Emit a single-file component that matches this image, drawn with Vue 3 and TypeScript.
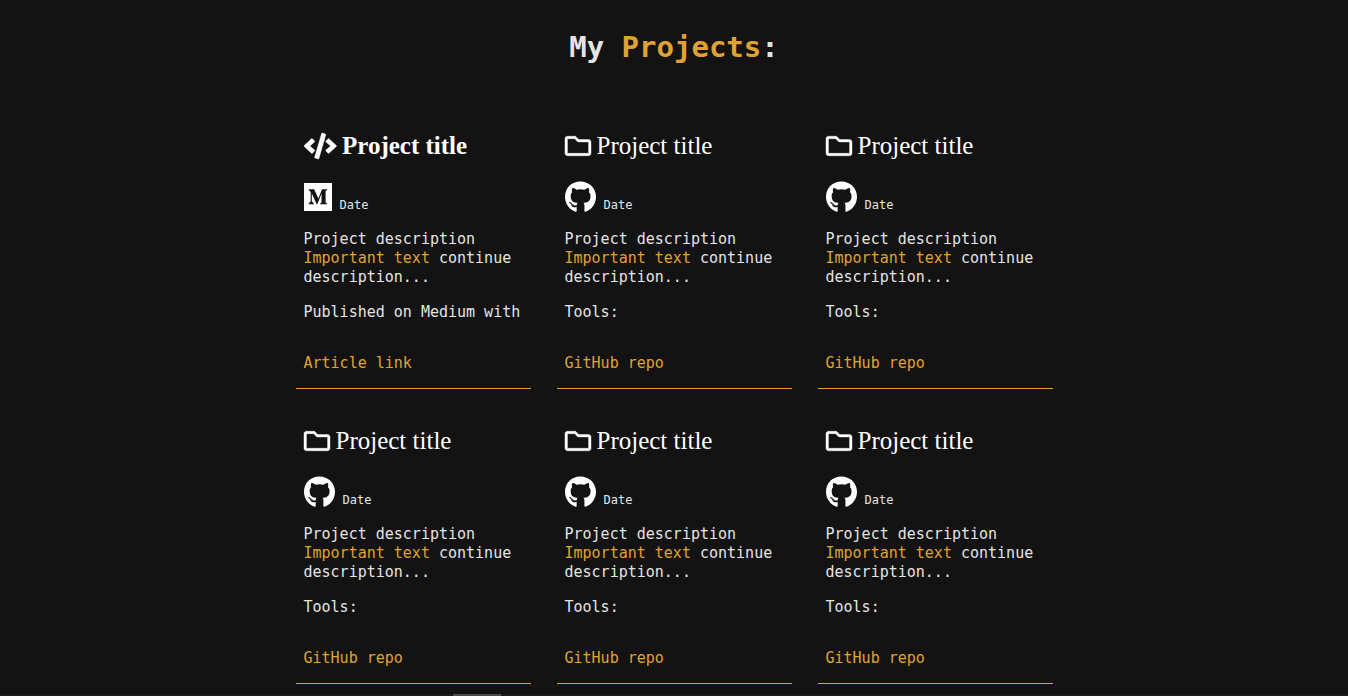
<script setup lang="ts">
type IconName = 'code' | 'folder' | 'github' | 'medium'

interface Project {
  id: number
  titleIcon: IconName
  sourceIcon: IconName
  featured: boolean
  note: string
  link: string
}

const icons: Record<IconName, { width: number; path: string }> = {
  code: {
    width: 640,
    path: 'M278.9 511.5l-61-17.7c-6.4-1.8-10-8.5-8.2-14.9L346.2 8.7c1.8-6.4 8.5-10 14.9-8.2l61 17.7c6.4 1.8 10 8.5 8.2 14.9L293.8 503.3c-1.9 6.4-8.5 10.1-14.9 8.2zm-114-112.2l43.5-46.4c4.6-4.9 4.3-12.7-.8-17.2L117 256l90.6-79.7c5.1-4.5 5.5-12.3.8-17.2l-43.5-46.4c-4.5-4.8-12.1-5.1-17-.5L3.8 247.2c-5.1 4.7-5.1 12.8 0 17.5l144.1 135.1c4.9 4.6 12.5 4.4 17-.5zm327.2.6l144.1-135.1c5.1-4.7 5.1-12.8 0-17.5L492.1 112.1c-4.8-4.5-12.4-4.3-17 .5L431.6 159c-4.6 4.9-4.3 12.7.8 17.2L523 256l-90.6 79.7c-5.1 4.5-5.5 12.3-.8 17.2l43.5 46.4c4.5 4.9 12.1 5.1 17 .6z',
  },
  folder: {
    width: 512,
    path: 'M464 128H272l-54.63-54.63c-6-6-14.14-9.37-22.63-9.37H48C21.49 64 0 85.49 0 112v288c0 26.51 21.49 48 48 48h416c26.51 0 48-21.49 48-48V176c0-26.51-21.49-48-48-48zm0 272H48V112h140.12l54.63 54.63c6 6 14.14 9.37 22.63 9.37H464v224z',
  },
  github: {
    width: 496,
    path: 'M165.9 397.4c0 2-2.3 3.6-5.2 3.6-3.3.3-5.6-1.3-5.6-3.6 0-2 2.3-3.6 5.2-3.6 3-.3 5.6 1.3 5.6 3.6zm-31.1-4.5c-.7 2 1.3 4.3 4.3 4.9 2.6 1 5.6 0 6.2-2s-1.3-4.3-4.3-5.2c-2.6-.7-5.5.3-6.2 2.3zm44.2-1.7c-2.9.7-4.9 2.6-4.6 4.9.3 2 2.9 3.3 5.9 2.6 2.9-.7 4.9-2.6 4.6-4.6-.3-1.9-3-3.2-5.9-2.9zM244.8 8C106.1 8 0 113.3 0 252c0 110.9 69.8 205.8 169.5 239.2 12.8 2.3 17.3-5.6 17.3-12.1 0-6.2-.3-40.4-.3-61.4 0 0-70 15-84.7-29.8 0 0-11.4-29.1-27.8-36.6 0 0-22.9-15.7 1.6-15.4 0 0 24.9 2 38.6 25.8 21.9 38.6 58.6 27.5 72.9 20.9 2.3-16 8.8-27.1 16-33.7-55.9-6.2-112.3-14.3-112.3-110.5 0-27.5 7.6-41.3 23.6-58.9-2.6-6.5-11.1-33.3 2.6-67.9 20.9-6.5 69 27 69 27 20-5.6 41.5-8.5 62.8-8.5s42.8 2.9 62.8 8.5c0 0 48.1-33.6 69-27 13.7 34.7 5.2 61.4 2.6 67.9 16 17.7 25.8 31.5 25.8 58.9 0 96.5-58.9 104.2-114.8 110.5 9.2 7.9 17 22.9 17 46.4 0 33.7-.3 75.4-.3 83.6 0 6.5 4.6 14.4 17.3 12.1C428.2 457.8 496 362.9 496 252 496 113.3 383.5 8 244.8 8zM97.2 352.9c-1.3 1-1 3.3.7 5.2 1.6 1.6 3.9 2.3 5.2 1 1.3-1 1-3.3-.7-5.2-1.6-1.6-3.9-2.3-5.2-1zm-10.8-8.1c-.7 1.3.3 2.9 2.3 3.9 1.6 1 3.6.7 4.3-.7.7-1.3-.3-2.9-2.3-3.9-2-.6-3.6-.3-4.3.7zm32.4 35.6c-1.6 1.3-1 4.3 1.3 6.2 2.3 2.3 5.2 2.6 6.5 1 1.3-1.3.7-4.3-1.3-6.2-2.2-2.3-5.2-2.6-6.5-1zm-11.4-14.7c-1.6 1-1.6 3.6 0 5.9 1.6 2.3 4.3 3.3 5.6 2.3 1.6-1.3 1.6-3.9 0-6.2-1.4-2.3-4-3.3-5.6-2z',
  },
  medium: {
    width: 448,
    path: 'M0 32v448h448V32H0zm372.2 106.1l-24 23c-2.1 1.6-3.1 4.2-2.7 6.7v169.3c-.4 2.6.6 5.2 2.7 6.7l23.5 23v5.1h-118V367l24.3-23.6c2.4-2.4 2.4-3.1 2.4-6.7V199.8l-67.6 171.6h-9.1L125 199.8v115c-.7 4.8 1 9.7 4.4 13.2l31.6 38.3v5.1H71.2v-5.1l31.6-38.3c3.4-3.5 4.9-8.4 4.1-13.2v-133c.4-3.7-1-7.3-3.8-9.8L75 138.1V133h87.3l67.4 148L289 133.1h83.2v5z',
  },
}

const article: Project = {
  id: 1,
  titleIcon: 'code',
  sourceIcon: 'medium',
  featured: true,
  note: 'Published on Medium with',
  link: 'Article link',
}

const repos: Project[] = [2, 3, 4, 5, 6].map((id) => ({
  id,
  titleIcon: 'folder',
  sourceIcon: 'github',
  featured: false,
  note: 'Tools:',
  link: 'GitHub repo',
}))

const projects: Project[] = [article, ...repos]
</script>

<template>
  <div class="page">
    <main class="content">
      <h1 class="heading">My <span class="accent">Projects</span>:</h1>
      <section class="grid">
        <article v-for="project in projects" :key="project.id" class="card">
          <h2 class="title" :class="{ featured: project.featured }">
            <svg class="title-icon" :viewBox="`0 0 ${icons[project.titleIcon].width} 512`" aria-hidden="true">
              <path :d="icons[project.titleIcon].path" />
            </svg>
            <span>Project title</span>
          </h2>
          <div class="meta">
            <svg class="source-icon" :viewBox="`0 0 ${icons[project.sourceIcon].width} 512`" aria-hidden="true">
              <path :d="icons[project.sourceIcon].path" />
            </svg>
            <small class="date">Date</small>
          </div>
          <p class="text">
            Project description <span class="accent">Important text</span> continue description...
          </p>
          <p class="text">{{ project.note }}</p>
          <a class="link" href="#">{{ project.link }}</a>
        </article>
      </section>
    </main>
    <div class="track"><div class="thumb"></div></div>
  </div>
</template>

<style>
body {
  margin: 0;
  background: #131313;
}
</style>

<style scoped>
.page {
  display: flex;
  flex-direction: column;
  min-height: 100vh;
  box-sizing: border-box;
  background: #131313;
  color: #e4e4e4;
  font-family: Consolas, "DejaVu Sans Mono", monospace;
  font-size: 15px;
  line-height: 19px;
}

.content {
  flex: 1;
  padding: 28px 16px 8px;
}

.heading {
  margin: 0 0 64px;
  font-size: 29px;
  line-height: 38px;
  font-weight: 700;
  text-align: center;
}

.accent {
  color: #e0a232;
}

.grid {
  display: grid;
  grid-template-columns: repeat(3, minmax(0, 1fr));
  gap: 36px 26px;
  max-width: 757px;
  margin: 0 auto;
}

.card {
  display: flex;
  flex-direction: column;
  padding: 0 8px 15px;
  border-bottom: 1px solid #e0a232;
}

.title {
  display: flex;
  align-items: center;
  gap: 6px;
  margin: 0 0 19px;
  color: #ffffff;
  font-family: "Liberation Serif", serif;
  font-size: 25px;
  line-height: 32px;
  font-weight: 400;
}

.featured {
  font-weight: 700;
}

.title-icon {
  width: auto;
  height: 26px;
  overflow: visible;
  fill: #ffffff;
  stroke: #ffffff;
  stroke-width: 8;
}

.meta {
  display: flex;
  align-items: flex-end;
  gap: 8px;
  margin-bottom: 17px;
}

.source-icon {
  width: auto;
  height: 32px;
  fill: #ffffff;
}

.date {
  font-size: 12px;
  line-height: 16px;
}

.text {
  margin: 0 0 16px;
}

.link {
  align-self: flex-start;
  margin-top: 16px;
  color: #e0a232;
  text-decoration: none;
}

.track {
  height: 2px;
  padding-left: 33.6%;
  background: #1c1a1a;
}

.thumb {
  width: 48px;
  height: 2px;
  background: #4a4a4a;
}
</style>
